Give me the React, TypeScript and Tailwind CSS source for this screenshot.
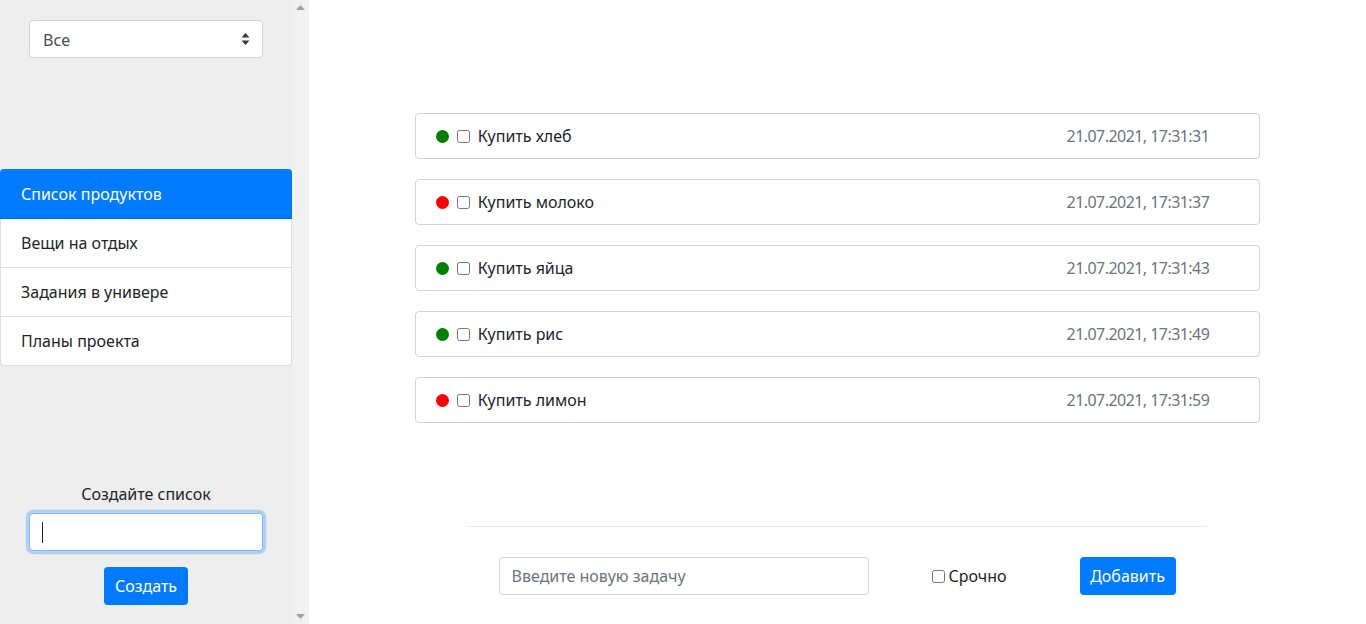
import { useState } from 'react'

type Task = { id: number; title: string; urgent: boolean; date: string }

const LISTS = ['Список продуктов', 'Вещи на отдых', 'Задания в универе', 'Планы проекта']

const TASKS: Task[] = [
  { id: 1, title: 'Купить хлеб', urgent: false, date: '21.07.2021, 17:31:31' },
  { id: 2, title: 'Купить молоко', urgent: true, date: '21.07.2021, 17:31:37' },
  { id: 3, title: 'Купить яйца', urgent: false, date: '21.07.2021, 17:31:43' },
  { id: 4, title: 'Купить рис', urgent: false, date: '21.07.2021, 17:31:49' },
  { id: 5, title: 'Купить лимон', urgent: true, date: '21.07.2021, 17:31:59' },
]

const Sidebar = () => {
  const [active, setActive] = useState(0)

  return (
    <div className="flex h-[624px] shrink-0 bg-[#eeeeee]">
      <div className="flex w-[292px] flex-col">
        <div className="relative mx-auto mt-[20px] w-[234px]">
          <select className="h-[38px] w-full appearance-none rounded-[4px] border border-[#ced4da] bg-white pl-[13px] pt-[2px] text-[16px] text-[#495057] outline-none">
            <option>Все</option>
          </select>
          <svg className="pointer-events-none absolute right-[13px] top-[13px]" width="9" height="12" viewBox="0 0 9 12">
            <path d="M4.5 0 L8.5 4.6 H0.5 Z M4.5 12 L8.5 7.4 H0.5 Z" fill="#343a40" />
          </svg>
        </div>

        <ul className="mt-[111px] flex flex-col rounded-[4px] border border-black/[0.125] bg-white">
          {LISTS.map((name, i) => (
            <li
              key={name}
              onClick={() => setActive(i)}
              className={
                i === active
                  ? '-m-px cursor-pointer rounded-t-[4px] bg-[#007bff] px-[21px] py-[13px] text-[16px] leading-[24px] text-white'
                  : 'cursor-pointer border-t border-black/[0.125] px-[20px] py-[12px] text-[16px] leading-[24px] text-[#212529] first:border-t-0'
              }
            >
              {name}
            </li>
          ))}
        </ul>

        <div className="mt-auto flex flex-col items-center pb-[19px]">
          <p className="text-[16px] leading-[24px] text-[#212529]">Создайте список</p>
          <div className="relative mt-[7px] w-[234px]">
            <input className="h-[38px] w-full rounded-[4px] border border-[#80bdff] bg-white px-[12px] text-[16px] shadow-[0_0_0_3.2px_rgba(0,123,255,0.25)] outline-none" />
            <span className="absolute left-[13px] top-[9px] h-[21px] w-px bg-[#212529]" />
          </div>
          <button className="mt-[16px] h-[38px] w-[84px] rounded-[4px] bg-[#007bff] text-[16px] text-white">
            Создать
          </button>
        </div>
      </div>

      <div className="flex w-[17px] flex-col items-center justify-between bg-[#f1f1f1] py-[5px]">
        <svg width="9" height="5" viewBox="0 0 9 5">
          <path d="M4.5 0 L9 5 H0 Z" fill="#a3a3a3" />
        </svg>
        <svg width="9" height="5" viewBox="0 0 9 5">
          <path d="M0 0 H9 L4.5 5 Z" fill="#a3a3a3" />
        </svg>
      </div>
    </div>
  )
}

const TaskCard = ({ task }: { task: Task }) => (
  <div className="mb-[20px] flex items-center rounded-[4px] border border-[#d3d3d3] py-[10px] pl-[20px] pr-[50px]">
    <span className={`h-[13px] w-[13px] rounded-full ${task.urgent ? 'bg-[#ff0000]' : 'bg-[#008000]'}`} />
    <input type="checkbox" className="ml-[8px] h-[13px] w-[13px]" />
    <span className="ml-[8px] text-[16px] leading-[24px] text-[#212529]">{task.title}</span>
    <span className="ml-auto text-[16px] leading-[24px] tracking-[-0.55px] text-[#6c757d]">{task.date}</span>
  </div>
)

const App = () => {
  const [urgent, setUrgent] = useState(false)

  return (
    <div className="flex h-[624px] overflow-hidden bg-white font-['Noto_Sans',sans-serif]">
      <Sidebar />
      <main className="flex flex-1 flex-col items-center pt-[113px]">
        <div className="w-[80%]">
          {TASKS.map(t => <TaskCard key={t.id} task={t} />)}
        </div>

        <div className="mt-[83px] w-[70%] border-t border-[#e9ecef]">
          <div className="mt-[30px] flex items-center pl-[31px]">
            <input
              placeholder="Введите новую задачу"
              className="h-[38px] w-[370px] rounded-[4px] border border-[#ced4da] px-[12px] text-[16px] outline-none placeholder:text-[#6c757d]"
            />
            <label className="ml-[63px] flex w-[73px] items-center text-[16px] text-[#212529]">
              <input
                type="checkbox"
                checked={urgent}
                onChange={e => setUrgent(e.target.checked)}
                className="mr-[4px] h-[13px] w-[13px]"
              />
              Срочно
            </label>
            <button className="ml-[75px] h-[38px] w-[96px] rounded-[4px] bg-[#007bff] text-[16px] text-white">
              Добавить
            </button>
          </div>
        </div>
      </main>
    </div>
  )
}

export default App
